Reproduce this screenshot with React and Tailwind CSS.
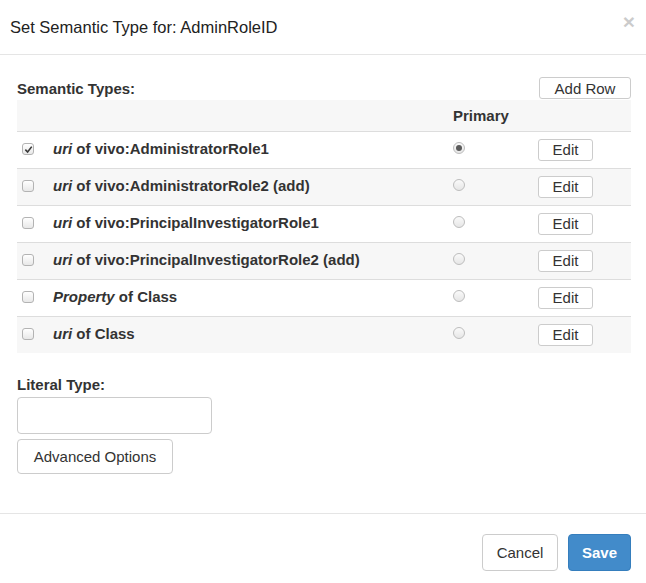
import React from 'react';

const rows = [
  { em: 'uri', rest: ' of vivo:AdministratorRole1', checked: true },
  { em: 'uri', rest: ' of vivo:AdministratorRole2 (add)' },
  { em: 'uri', rest: ' of vivo:PrincipalInvestigatorRole1' },
  { em: 'uri', rest: ' of vivo:PrincipalInvestigatorRole2 (add)' },
  { em: 'Property', rest: ' of Class' },
  { em: 'uri', rest: ' of Class' },
];

const Checkbox = ({ checked }) => (
  <span className="flex h-[12px] w-[12px] items-center justify-center rounded-[3px] border border-[#b3b3b3] bg-gradient-to-b from-white to-[#e8e8e8]">
    {checked && (
      <svg width="9" height="9" viewBox="0 0 10 10">
        <path d="M1.5 5.2 L4 7.8 L8.6 1.8" fill="none" stroke="#3a3a3a" strokeWidth="1.8" />
      </svg>
    )}
  </span>
);

const Radio = ({ checked }) => (
  <span className="flex h-[12px] w-[12px] items-center justify-center rounded-full border border-[#bdbdbd] bg-gradient-to-b from-[#fafafa] to-[#e6e6e6]">
    {checked && <span className="h-[6px] w-[6px] rounded-full bg-[#5a5a5a]" />}
  </span>
);

const App = () => {
  return (
    <div className="relative h-[583px] w-[646px] bg-white text-[15px] leading-[20px] text-[#333] font-['Liberation_Sans',Arial,sans-serif]">
      {/* header */}
      <div className="flex h-[55px] items-center border-b border-[#e5e5e5] pl-[10px]">
        <h4 className="text-[16.5px] leading-none text-[#222]">Set Semantic Type for: AdminRoleID</h4>
      </div>
      <button className="absolute right-[11px] top-[11px] text-[21px] font-bold leading-none text-black opacity-20">×</button>

      {/* body */}
      <div className="pl-[17px] pr-[15px] pt-[22px]">
        <div className="flex h-[22px] items-center justify-between">
          <label className="mt-[1px] font-bold leading-none">Semantic Types:</label>
          <button className="h-[22px] w-[92px] rounded-[3px] border border-[#ccc] bg-white text-[15px] leading-none text-[#333]">
            Add Row
          </button>
        </div>
        <div className="mt-[1px]">
          <div className="flex h-[31px] items-center bg-[#f7f7f7]">
            <div className="flex-1" />
            <div className="w-[85px] font-bold">Primary</div>
            <div className="w-[93px]" />
          </div>
          {rows.map((r, i) => (
            <div
              key={i}
              className={`flex h-[37px] items-center border-t border-[#ddd] ${i % 2 === 1 ? 'bg-[#f7f7f7]' : 'bg-white'}`}
            >
              <div className="flex w-[36px] pl-[5px] pb-[2px]">
                <Checkbox checked={r.checked} />
              </div>
              <div className="flex-1 pb-[2px] font-bold">
                <em>{r.em}</em>
                {r.rest}
              </div>
              <div className="flex w-[85px] pb-[4px]">
                <Radio checked={r.checked} />
              </div>
              <div className="w-[93px] pb-[1px]">
                <button className="h-[22px] w-[55px] rounded-[3px] border border-[#ccc] bg-white text-[15px] leading-none text-[#333]">
                  Edit
                </button>
              </div>
            </div>
          ))}
        </div>

        <label className="mt-[24px] block font-bold leading-[16px]">Literal Type:</label>
        <input className="mt-[4px] block h-[37px] w-[195px] rounded-[4px] border border-[#ccc] bg-white px-3 outline-none" />
        <button className="mt-[5px] block h-[35px] w-[156px] rounded-[4px] border border-[#ccc] bg-white text-[15px] text-[#333]">
          Advanced Options
        </button>
      </div>

      {/* footer */}
      <div className="absolute bottom-0 left-0 right-0 flex h-[70px] justify-end gap-[10px] border-t border-[#e5e5e5] pr-[15px] pt-[20px]">
        <button className="h-[37px] w-[76px] rounded-[4px] border border-[#ccc] bg-white text-[15px] text-[#333]">
          Cancel
        </button>
        <button className="h-[37px] w-[63px] rounded-[4px] border border-[#357ebd] bg-[#428bca] text-[15px] font-bold text-white">
          Save
        </button>
      </div>
    </div>
  );
};

export default App;
